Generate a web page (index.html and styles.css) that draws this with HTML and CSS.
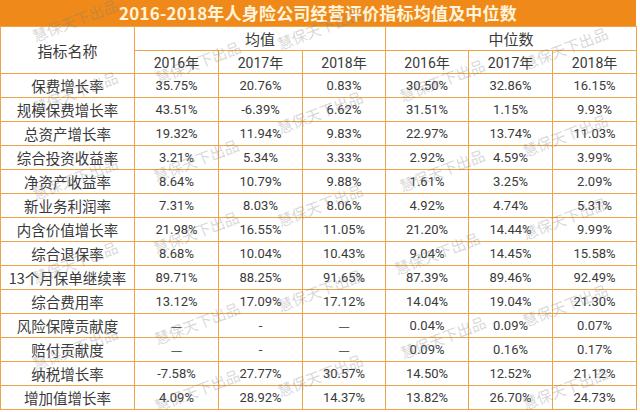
FILE: index.html
```html
<!DOCTYPE html>
<html lang="zh-CN">
<head>
<meta charset="utf-8">
<title>2016-2018年人身险公司经营评价指标均值及中位数</title>
<link rel="stylesheet" href="styles.css">
</head>
<body>
<div class="sheet">
  <div class="title">2016-2018年人身险公司经营评价指标均值及中位数</div>
  <table class="grid">
    <colgroup>
      <col class="c-name"><col class="c-a"><col class="c-a"><col class="c-b"><col class="c-b"><col class="c-a"><col class="c-a">
    </colgroup>
    <thead>
      <tr class="h1"><th rowspan="2" class="name">指标名称</th><th colspan="3">均值</th><th colspan="3">中位数</th></tr>
      <tr class="h2"><th>2016年</th><th>2017年</th><th>2018年</th><th>2016年</th><th>2017年</th><th>2018年</th></tr>
    </thead>
    <tbody>
      <tr><th>保费增长率</th><td>35.75%</td><td>20.76%</td><td>0.83%</td><td>30.50%</td><td>32.86%</td><td>16.15%</td></tr>
      <tr><th>规模保费增长率</th><td>43.51%</td><td>-6.39%</td><td>6.62%</td><td>31.51%</td><td>1.15%</td><td>9.93%</td></tr>
      <tr><th>总资产增长率</th><td>19.32%</td><td>11.94%</td><td>9.83%</td><td>22.97%</td><td>13.74%</td><td>11.03%</td></tr>
      <tr><th>综合投资收益率</th><td>3.21%</td><td>5.34%</td><td>3.33%</td><td>2.92%</td><td>4.59%</td><td>3.99%</td></tr>
      <tr><th>净资产收益率</th><td>8.64%</td><td>10.79%</td><td>9.88%</td><td>1.61%</td><td>3.25%</td><td>2.09%</td></tr>
      <tr><th>新业务利润率</th><td>7.31%</td><td>8.03%</td><td>8.06%</td><td>4.92%</td><td>4.74%</td><td>5.31%</td></tr>
      <tr><th>内含价值增长率</th><td>21.98%</td><td>16.55%</td><td>11.05%</td><td>21.20%</td><td>14.44%</td><td>9.99%</td></tr>
      <tr><th>综合退保率</th><td>8.68%</td><td>10.04%</td><td>10.43%</td><td>9.04%</td><td>14.45%</td><td>15.58%</td></tr>
      <tr><th>13个月保单继续率</th><td>89.71%</td><td>88.25%</td><td>91.65%</td><td>87.39%</td><td>89.46%</td><td>92.49%</td></tr>
      <tr><th>综合费用率</th><td>13.12%</td><td>17.09%</td><td>17.12%</td><td>14.04%</td><td>19.04%</td><td>21.30%</td></tr>
      <tr><th>风险保障贡献度</th><td class="dash">—</td><td>-</td><td class="dash">—</td><td>0.04%</td><td>0.09%</td><td>0.07%</td></tr>
      <tr><th>赔付贡献度</th><td class="dash">—</td><td>-</td><td class="dash">—</td><td>0.09%</td><td>0.16%</td><td>0.17%</td></tr>
      <tr><th>纳税增长率</th><td>-7.58%</td><td>27.77%</td><td>30.57%</td><td>14.50%</td><td>12.52%</td><td>21.12%</td></tr>
      <tr><th>增加值增长率</th><td>4.09%</td><td>28.92%</td><td>14.37%</td><td>13.82%</td><td>26.70%</td><td>24.73%</td></tr>
    </tbody>
  </table>
  <div class="marks" aria-hidden="true">
    <span class="wm a1">慧保天下出品</span>
    <span class="wm a2">慧保天下出品</span>
    <span class="wm a3">慧保天下出品</span>
    <span class="wm a4">慧保天下出品</span>
    <span class="wm a5">慧保天下出品</span>
    <span class="wm b1">慧保天下出品</span>
    <span class="wm b2">慧保天下出品</span>
    <span class="wm b3">慧保天下出品</span>
    <span class="wm b4">慧保天下出品</span>
    <span class="wm b5">慧保天下出品</span>
    <span class="wm c1">慧保天下出品</span>
    <span class="wm c2">慧保天下出品</span>
    <span class="wm c3">慧保天下出品</span>
    <span class="wm c4">慧保天下出品</span>
    <span class="wm c5">慧保天下出品</span>
    <span class="wm d1">慧保天下出品</span>
    <span class="wm d2">慧保天下出品</span>
    <span class="wm d3">慧保天下出品</span>
    <span class="wm d4">慧保天下出品</span>
    <span class="wm e1">慧保天下出品</span>
    <span class="wm e2">慧保天下出品</span>
    <span class="wm e3">慧保天下出品</span>
    <span class="wm e4">慧保天下出品</span>
    <span class="wm e5">慧保天下出品</span>
  </div>
</div>
</body>
</html>
```

FILE: styles.css
```css
html, body {
  margin: 0;
  padding: 0;
  background: #ffffff;
}

.sheet {
  position: relative;
  width: 636px;
  font-family: "Noto Sans CJK SC", "Noto Sans", sans-serif;
  color: #3a3a3a;
}

.title {
  height: 26px;
  background: #ef8a1a;
  color: #fff4dc;
  font-weight: 700;
  font-size: 17px;
  line-height: 26px;
  text-align: center;
  letter-spacing: 0.2px;
}

.grid {
  border-collapse: collapse;
  table-layout: fixed;
  width: 636px;
}

.c-name { width: 134px; }
.c-a { width: 84px; }
.c-b { width: 83px; }

.grid th,
.grid td {
  border: 1px solid #f0a447;
  padding: 0;
  text-align: center;
  vertical-align: middle;
  font-weight: 400;
  white-space: nowrap;
}

.grid thead th {
  font-size: 15px;
}

.grid .h1 { height: 24px; }
.grid .h2 { height: 23px; }

.grid .h2 th {
  font-family: "Roboto", "Noto Sans CJK SC", sans-serif;
  font-size: 14px;
}

.grid tbody tr { height: 24px; }

.grid tbody th {
  font-size: 14.5px;
  line-height: 20px;
}

.grid tbody td {
  font-family: "Roboto", "Noto Sans CJK SC", sans-serif;
  font-size: 13px;
  line-height: 20px;
}

.grid tbody td.dash {
  font-family: "Noto Sans CJK SC", sans-serif;
  font-size: 13px;
}

.marks {
  position: absolute;
  inset: 0;
  pointer-events: none;
}

.wm {
  position: absolute;
  transform: translate(-50%, -50%) rotate(-21deg);
  font-size: 15px;
  color: rgba(120, 120, 120, 0.3);
  white-space: nowrap;
  line-height: 1;
}

.a1 { left: 75px;  top: 20px; }
.a2 { left: 75px;  top: 92px; }
.a3 { left: 75px;  top: 178px; }
.a4 { left: 75px;  top: 262px; }
.a5 { left: 75px;  top: 348px; }

.b1 { left: 198px; top: 62px; }
.b2 { left: 196px; top: 160px; }
.b3 { left: 196px; top: 232px; }
.b4 { left: 197px; top: 323px; }
.b5 { left: 197px; top: 390px; }

.c1 { left: 320px; top: 28px; }
.c2 { left: 320px; top: 112px; }
.c3 { left: 320px; top: 205px; }
.c4 { left: 320px; top: 290px; }
.c5 { left: 320px; top: 375px; }

.d1 { left: 442px; top: 80px; }
.d2 { left: 442px; top: 170px; }
.d3 { left: 437px; top: 253px; }
.d4 { left: 443px; top: 337px; }

.e1 { left: 565px; top: 48px; }
.e2 { left: 565px; top: 135px; }
.e3 { left: 565px; top: 218px; }
.e4 { left: 565px; top: 305px; }
.e5 { left: 565px; top: 388px; }
```
